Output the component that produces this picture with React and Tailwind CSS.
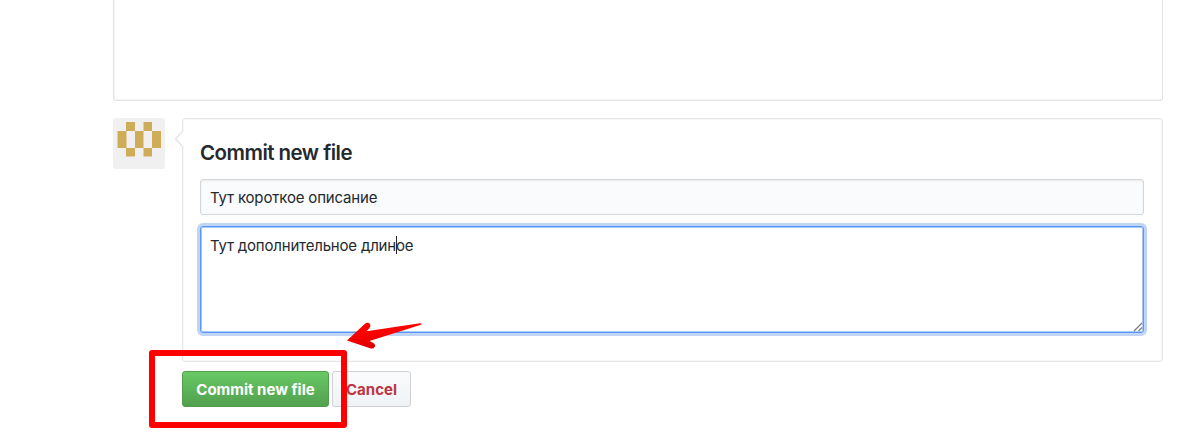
const CELLS = [
  [26, 12, 9, 9], [43.5, 12, 8.5, 9],
  [17.5, 21, 9, 17], [35, 21, 8.5, 17], [52, 21, 9, 17],
  [26, 38, 9, 8.5], [43.5, 38, 8.5, 8.5],
];

function Avatar() {
  return (
    <svg className="block h-[51px] w-[52px] shrink-0 rounded-[3px]" viewBox="13 8 52 51" role="img">
      <rect x="13" y="8" width="52" height="51" fill="#f0f0f0" />
      {CELLS.map(([x, y, w, h]) => (
        <rect key={`${x}-${y}`} x={x} y={y} width={w} height={h} fill="#cfad58" />
      ))}
    </svg>
  );
}

function CommitPanel() {
  return (
    <section className="relative h-[244px] w-[981px] rounded-[3px] border border-[#e6e6e6] bg-white px-[17px] pt-[20px] shadow-[inset_0_0_0_1px_#f8f8f8]">
      <svg className="absolute -left-[9px] top-[12px] h-4 w-[10px]" viewBox="0 0 10 16">
        <path d="M9 0 L1.5 8 L9 16" fill="#fff" stroke="#e3e3e3" strokeWidth="1.4" />
        <path d="M9 1 V15" stroke="#fff" strokeWidth="2" />
      </svg>
      <h3 className="h-[28px] whitespace-nowrap text-[20.5px] leading-[28px] font-semibold tracking-[-0.53px]">
        Commit new file
      </h3>
      <div
        role="textbox"
        className="mt-[12px] h-[36px] w-[944px] rounded-[3px] border border-[#d3d7db] bg-[#fafbfc] pl-[9px] text-[15px] leading-[35px] tracking-[-0.17px] shadow-[inset_0_1px_2px_rgba(27,31,35,0.075)]"
      >
        <span className="whitespace-nowrap">Тут короткое описание</span>
      </div>
      <div
        role="textbox"
        aria-multiline="true"
        className="relative mt-[11px] h-[107px] w-[944px] rounded-[3px] border border-[#5898f7] bg-white pt-[7px] pl-[9px] text-[15px] leading-[24px] tracking-[-0.19px] shadow-[0_0_0_3px_#c0d5f6,inset_0_0_0_1px_#a9c9fb]"
      >
        <span className="whitespace-nowrap">Тут дополнительное длиное</span>
        <span className="absolute left-[195px] top-[9px] h-[18px] w-px bg-[#24292e]" />
        <svg className="absolute right-0 bottom-0 h-[10px] w-[10px]" viewBox="0 0 10 10">
          <path d="M1 9 L9 1 M5.5 9 L9 5.5" stroke="#777" strokeWidth="1.1" />
        </svg>
      </div>
    </section>
  );
}

export default function App() {
  return (
    <main className="relative h-[436px] w-[1200px] overflow-hidden bg-white pl-[113px] font-['Inter','Liberation_Sans',sans-serif] text-[#24292e]">
      <div className="h-[101px] w-[1050px] rounded-b-[3px] border border-t-0 border-[#e3e3e3] shadow-[inset_1px_-1px_0_#f6f6f6]" />
      <div className="mt-[17px] flex gap-[17px]">
        <Avatar />
        <CommitPanel />
      </div>
      <div className="mt-[9px] ml-[69px] flex gap-[3px] text-[15px] leading-[24px] font-bold tracking-[0px]">
        <button className="h-[36px] w-[147px] whitespace-nowrap rounded-[3px] border border-[#4e9e4c] bg-linear-to-b from-[#69c965] to-[#52a04e] pt-px text-white">
          Commit new file
        </button>
        <button className="h-[36px] w-[79px] whitespace-nowrap rounded-[3px] border border-[#cfd1d4] bg-linear-to-b from-[#fafbfc] to-[#eff3f6] pt-px text-[#bd3540]">
          Cancel
        </button>
      </div>
      <div className="absolute left-[149px] top-[350px] h-[78px] w-[198px] rounded-[3px] border-[6px] border-[#fe0000]" />
      <svg className="absolute left-[340px] top-[315px] h-[40px] w-[90px]" viewBox="340 315 90 40">
        <defs>
          <linearGradient id="arrowShade" x1="0" y1="0" x2="0" y2="1">
            <stop offset="0.35" stopColor="#ff0000" />
            <stop offset="1" stopColor="#dc0000" />
          </linearGradient>
        </defs>
        <path
          d="M347 340.5 L365 323.8 Q368 321.6 370 324 Q371 326 369.5 328 L366.5 331.2 L420 323.2 Q422.5 323.4 421 324.8 L369.5 341 L373 342.7 Q376 344.5 374.7 347 Q373.3 349.2 370 348.2 Z"
          fill="url(#arrowShade)"
        />
      </svg>
    </main>
  );
}
